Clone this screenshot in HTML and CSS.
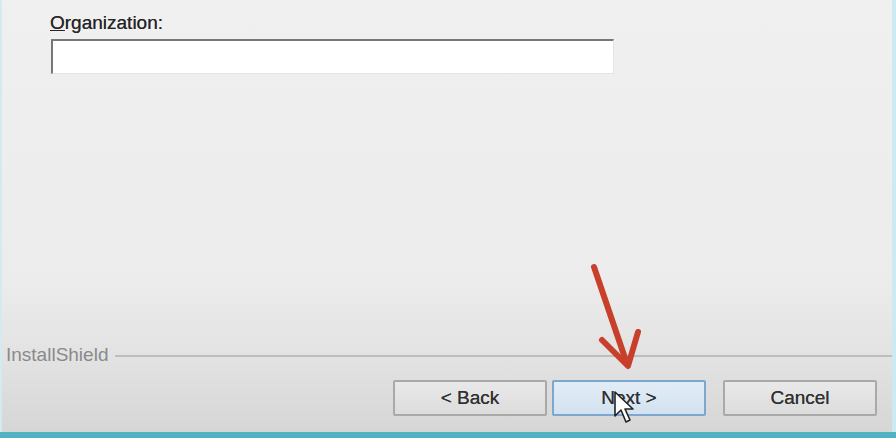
FILE: index.html
```html
<!DOCTYPE html>
<html lang="en">
<head>
    <meta charset="UTF-8">
    <title>InstallShield Wizard</title>
    <link rel="stylesheet" href="styles.css">
</head>
<body>
    <div class="dialog">
        <div class="content">
            <label class="field-label" for="org"><u>O</u>rganization:</label>
            <input type="text" id="org" class="field-input">
        </div>

        <div class="brand">
            <span class="brand-name">InstallShield</span>
            <div class="brand-line"></div>
        </div>

        <div class="buttons">
            <button class="wiz-button">&lt; Back</button>
            <button class="wiz-button default">Next &gt;</button>
            <button class="wiz-button cancel">Cancel</button>
        </div>
    </div>
    <div class="taskbar"></div>

    <!-- red arrow pointing at Next -->
    <svg class="arrow" width="80" height="120" viewBox="0 0 80 120">
        <line x1="14" y1="7" x2="45" y2="98" stroke="#c8402c" stroke-width="6" stroke-linecap="round"/>
        <polyline points="22,80 48,106 58,72" fill="none" stroke="#c8402c" stroke-width="6" stroke-linecap="round" stroke-linejoin="round"/>
    </svg>

    <!-- mouse pointer -->
    <svg class="cursor" width="24" height="36" viewBox="0 0 24 36">
        <path d="M2 2 L2 26 L8 20 L13 32 L17 30 L12 19 L20 19 Z" fill="#fff" stroke="#222" stroke-width="1.6" stroke-linejoin="round"/>
    </svg>
</body>
</html>
```

FILE: styles.css
```css
body {
    margin: 0;
    width: 896px;
    height: 438px;
    overflow: hidden;
    font-family: "Liberation Sans", Arial, sans-serif;
    position: relative;
    background: #f0f0f0;
}

.dialog {
    height: 432px;
    display: flex;
    flex-direction: column;
    box-sizing: border-box;
    border-left: 2px solid #d3ebef;
    border-right: 4px solid #cfe9f2;
    background: linear-gradient(to bottom, #f0f0f0 0, #ececec 280px, #e2e2e2 360px, #d6d6d6 432px);
}

.content {
    flex: 1;
    display: flex;
    flex-direction: column;
    align-items: flex-start;
    padding: 12px 0 0 48px;
}

.field-label {
    font-size: 19px;
    color: #262626;
    margin-bottom: 5px;
    text-shadow: 0 0 0.6px #444;
}

.field-input {
    width: 563px;
    height: 35px;
    box-sizing: border-box;
    margin-left: 1px;
    background: #fff;
    border: 1px solid #e4e4e4;
    border-top: 2px solid #777;
    border-left: 2px solid #777;
    outline: none;
}

.brand {
    display: flex;
    align-items: center;
    padding-left: 4px;
    height: 20px;
    margin-bottom: 15px;
}

.brand-name {
    font-size: 19px;
    color: #8a8a8a;
}

.brand-line {
    flex: 1;
    height: 2px;
    margin-left: 7px;
    margin-top: 2px;
    background: #bdbdbd;
}

.buttons {
    display: flex;
    justify-content: flex-end;
    padding-right: 15px;
    margin-bottom: 16px;
}

.wiz-button {
    width: 154px;
    height: 36px;
    margin-left: 5px;
    font-family: "Liberation Sans", Arial, sans-serif;
    font-size: 19px;
    color: #303030;
    text-shadow: 0 0 0.6px #444;
    background: linear-gradient(to bottom, #e9e9e9, #dcdcdc);
    border: 2px solid #a9a9a9;
    border-radius: 2px;
}

.wiz-button.default {
    background: linear-gradient(to bottom, #e2ecf6, #d3e2f0);
    border-color: #7ea7cf;
}

.wiz-button.cancel {
    margin-left: 17px;
}

.taskbar {
    height: 6px;
    background: #52b1c3;
}

.arrow {
    position: absolute;
    left: 580px;
    top: 260px;
}

.cursor {
    position: absolute;
    left: 613px;
    top: 390px;
}
```
